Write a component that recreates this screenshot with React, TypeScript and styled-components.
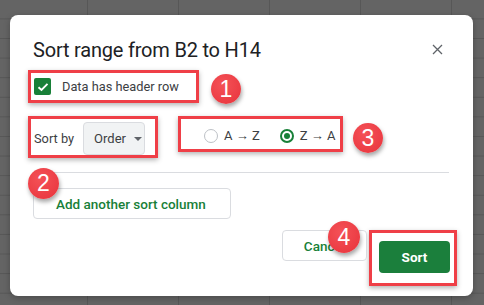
import styled, {createGlobalStyle} from 'styled-components';

const GlobalStyle = createGlobalStyle`
  html, body {
    margin: 0;
    padding: 0;
  }
  body {
    width: 484px;
    height: 305px;
    overflow: hidden;
    font-family: Roboto, 'Liberation Sans', Arial, sans-serif;
    background-color: #646464;
    background-image:
      linear-gradient(to right, #575757 1px, transparent 1px),
      linear-gradient(to bottom, #575757 1px, transparent 1px);
    background-size: 91px 19.6px;
    background-position: 87px 18.4px;
  }
`;

const Dialog = styled.div`
  box-sizing: border-box;
  width: 463px;
  height: 281px;
  margin: 15px 0 0 10px;
  padding: 21px 16px 0 18px;
  background: #fff;
  border-radius: 8px;
  display: flex;
  flex-direction: column;
  box-shadow: 0 2px 6px rgba(0, 0, 0, 0.25);
`;

const Header = styled.div`
  display: flex;
  align-items: center;
  justify-content: space-between;
  height: 28px;
  padding-left: 5px;
  padding-right: 14px;
`;

const Title = styled.h1`
  margin: 0;
  font-size: 20px;
  line-height: 28px;
  font-weight: 400;
  color: #202124;
  letter-spacing: -0.2px;
`;

const Close = styled.svg`
  width: 11px;
  height: 11px;
  margin-top: -1px;
`;

const Row = styled.div<{$top: number}>`
  display: flex;
  align-items: flex-start;
  margin-top: ${(p) => p.$top}px;
`;

const Marked = styled.div<{$w: number; $h: number}>`
  box-sizing: border-box;
  flex: none;
  width: ${(p) => p.$w}px;
  height: ${(p) => p.$h}px;
  border: 3px solid #ef3f47;
  box-shadow: 0 2px 5px rgba(0, 0, 0, 0.3);
  display: flex;
  align-items: center;
  white-space: nowrap;
`;

const CheckRow = styled(Marked)`
  padding: 0 0 0 3px;
  gap: 11px;
`;

const CheckBox = styled.span`
  flex: none;
  width: 17px;
  height: 17px;
  border-radius: 2px;
  background: #188038;
  display: flex;
  align-items: center;
  justify-content: center;
`;

const Label = styled.span`
  font-size: 12.8px;
  color: #3c4043;
`;

const SortBy = styled(Marked)`
  padding: 3px 0 0 3px;
  gap: 9px;
`;

const Select = styled.div`
  box-sizing: border-box;
  width: 62px;
  height: 33px;
  background: #f1f3f4;
  border: 1px solid #dadce0;
  border-radius: 4px;
  display: flex;
  align-items: center;
  padding-left: 10px;
  gap: 8px;
  font-size: 13px;
  color: #3c4043;
`;

const Caret = styled.span`
  width: 0;
  height: 0;
  border-left: 4px solid transparent;
  border-right: 4px solid transparent;
  border-top: 4px solid #5f6368;
`;

const Radios = styled(Marked)`
  margin-left: 20px;
  padding: 3px 0 0 23px;
`;

const RadioItem = styled.label`
  flex: none;
  display: flex;
  align-items: center;
  gap: 6px;
  margin-right: 20px;
  font-size: 13px;
  color: #3c4043;
  white-space: nowrap;
`;

const RadioDot = styled.span<{$on?: boolean}>`
  box-sizing: border-box;
  flex: none;
  width: 14px;
  height: 14px;
  border-radius: 50%;
  border: ${(p) => (p.$on ? '2px solid #188038' : '1px solid #bdc1c6')};
  display: flex;
  align-items: center;
  justify-content: center;

  &::after {
    content: '';
    display: ${(p) => (p.$on ? 'block' : 'none')};
    width: 6px;
    height: 6px;
    border-radius: 50%;
    background: #188038;
  }
`;

const Badge = styled.span<{$size?: number}>`
  box-sizing: border-box;
  flex: none;
  width: ${(p) => p.$size ?? 30}px;
  height: ${(p) => p.$size ?? 30}px;
  border-radius: 50%;
  background: radial-gradient(circle at 40% 35%, #f45157, #e8333b);
  color: #fff;
  font-family: 'Liberation Sans', Arial, sans-serif;
  font-size: 23px;
  display: flex;
  align-items: center;
  justify-content: center;
  box-shadow: 1px 3px 4px rgba(0, 0, 0, 0.35);
`;

const InlineBadge = styled(Badge)<{$left: number; $top: number}>`
  margin-left: ${(p) => p.$left}px;
  margin-top: ${(p) => p.$top}px;
`;

const FloatBadge = styled(Badge)<{$left: number; $top: number}>`
  position: absolute;
  left: ${(p) => p.$left}px;
  top: ${(p) => p.$top}px;
`;

const Divider = styled.hr`
  margin: 14px 8px 0 5px;
  border: none;
  border-top: 1px solid #dadce0;
`;

const Anchor = styled.div`
  position: relative;
  align-self: flex-start;
`;

const OutlineButton = styled.button<{$w: number}>`
  box-sizing: border-box;
  width: ${(p) => p.$w}px;
  height: 31px;
  background: #fff;
  border: 1px solid #dadce0;
  border-radius: 4px;
  color: #188038;
  font-family: Roboto, 'Liberation Sans', Arial, sans-serif;
  font-size: 13.5px;
  font-weight: 500;
  padding: 0;
`;

const AddWrap = styled(Anchor)`
  margin: 15px 0 0 5px;
`;

const AddButton = styled(OutlineButton)`
  text-align: left;
  padding-left: 22px;
`;

const Footer = styled.div`
  display: flex;
  justify-content: flex-end;
  align-items: center;
  gap: 2px;
  margin-top: 11px;
`;

const SortFrame = styled.div`
  box-sizing: border-box;
  width: 88px;
  height: 56px;
  border: 3px solid #ef3f47;
  box-shadow: 0 2px 5px rgba(0, 0, 0, 0.3);
  padding: 8px 4px 0 7px;
`;

const PrimaryButton = styled.button`
  width: 71px;
  height: 32px;
  border: none;
  border-radius: 4px;
  background: #1b7f3c;
  color: #fff;
  font-family: Roboto, 'Liberation Sans', Arial, sans-serif;
  font-size: 13.5px;
  font-weight: 700;
  padding: 0;
`;

export default function App() {
  return (
    <>
      <GlobalStyle />
      <Dialog>
        <Header>
          <Title>Sort range from B2 to H14</Title>
          <Close viewBox="0 0 11 11">
            <path d="M1 1L10 10M10 1L1 10" stroke="#5f6368" strokeWidth="1.3" />
          </Close>
        </Header>

        <Row $top={6}>
          <CheckRow $w={171} $h={33}>
            <CheckBox>
              <svg width="12" height="10" viewBox="0 0 12 10">
                <path d="M1.5 5.2L4.5 8L10.5 1.8" fill="none" stroke="#fff" strokeWidth="1.9" />
              </svg>
            </CheckBox>
            <Label>Data has header row</Label>
          </CheckRow>
          <InlineBadge $left={12} $top={4}>1</InlineBadge>
        </Row>

        <Row $top={12}>
          <SortBy $w={130} $h={42}>
            <Label>Sort by</Label>
            <Select>
              Order
              <Caret />
            </Select>
          </SortBy>
          <Radios $w={165} $h={36}>
            <RadioItem>
              <RadioDot />A → Z
            </RadioItem>
            <RadioItem>
              <RadioDot $on />Z → A
            </RadioItem>
          </Radios>
          <InlineBadge $left={10} $top={7}>3</InlineBadge>
        </Row>

        <Divider />

        <AddWrap>
          <AddButton $w={198}>Add another sort column</AddButton>
          <FloatBadge $size={31} $left={-5} $top={-20}>2</FloatBadge>
        </AddWrap>

        <Footer>
          <Anchor>
            <OutlineButton $w={85}>Cancel</OutlineButton>
            <FloatBadge $size={32} $left={46} $top={-9}>4</FloatBadge>
          </Anchor>
          <SortFrame>
            <PrimaryButton>Sort</PrimaryButton>
          </SortFrame>
        </Footer>
      </Dialog>
    </>
  );
}
